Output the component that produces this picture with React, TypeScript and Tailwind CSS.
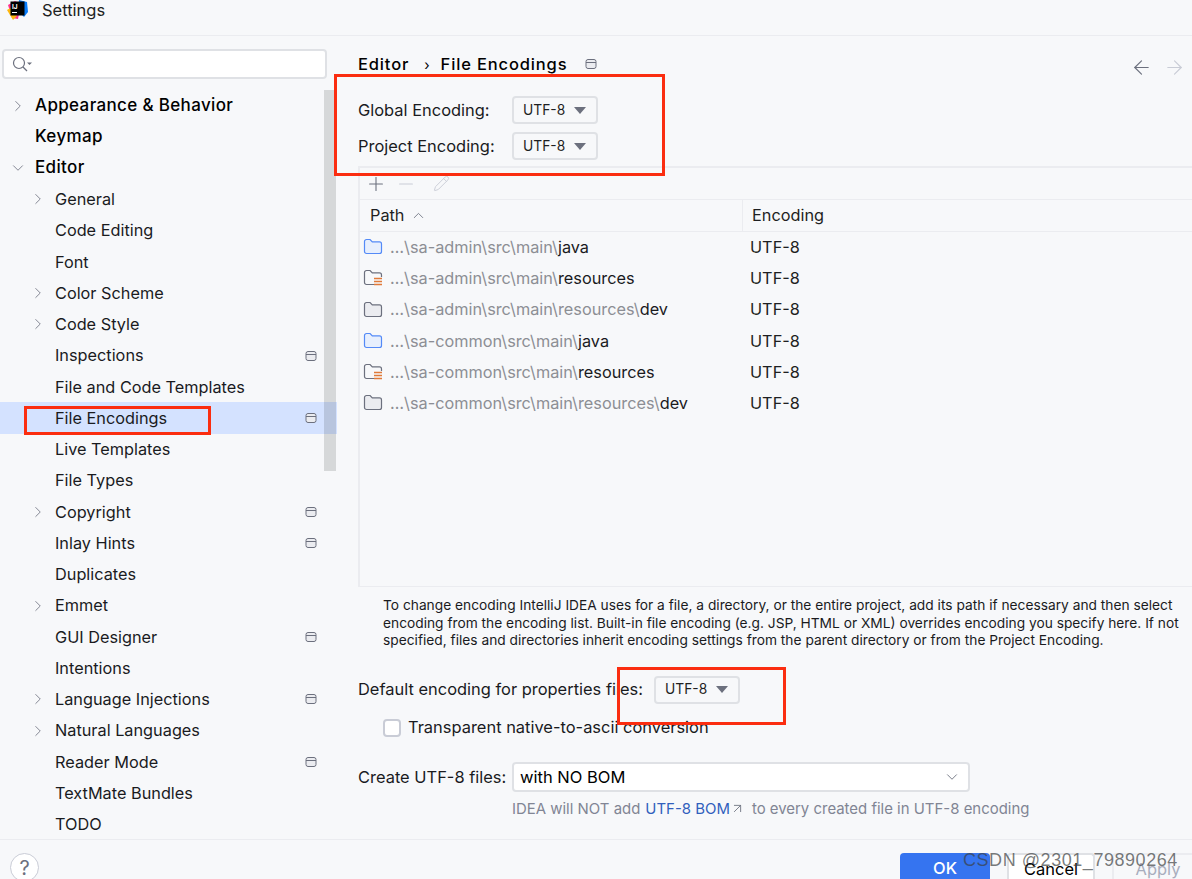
import { ChevronDown, ChevronRight, ChevronUp, Plus, Minus, Pencil, ArrowLeft, ArrowRight, ArrowUpRight } from "lucide-react";

const font = { fontFamily: "Inter, 'Noto Sans', sans-serif" };

type Node = { label: string; level: 0 | 1; arrow?: "right" | "down"; bold?: boolean; badge?: boolean; selected?: boolean };

const tree: Node[] = [
  { label: "Appearance & Behavior", level: 0, arrow: "right", bold: true },
  { label: "Keymap", level: 0, bold: true },
  { label: "Editor", level: 0, arrow: "down", bold: true },
  { label: "General", level: 1, arrow: "right" },
  { label: "Code Editing", level: 1 },
  { label: "Font", level: 1 },
  { label: "Color Scheme", level: 1, arrow: "right" },
  { label: "Code Style", level: 1, arrow: "right" },
  { label: "Inspections", level: 1, badge: true },
  { label: "File and Code Templates", level: 1 },
  { label: "File Encodings", level: 1, badge: true, selected: true },
  { label: "Live Templates", level: 1 },
  { label: "File Types", level: 1 },
  { label: "Copyright", level: 1, arrow: "right", badge: true },
  { label: "Inlay Hints", level: 1, badge: true },
  { label: "Duplicates", level: 1 },
  { label: "Emmet", level: 1, arrow: "right" },
  { label: "GUI Designer", level: 1, badge: true },
  { label: "Intentions", level: 1 },
  { label: "Language Injections", level: 1, arrow: "right", badge: true },
  { label: "Natural Languages", level: 1, arrow: "right" },
  { label: "Reader Mode", level: 1, badge: true },
  { label: "TextMate Bundles", level: 1 },
  { label: "TODO", level: 1 },
];

const paths = [
  { dim: "…\\sa-admin\\src\\main\\", end: "java", kind: "source" },
  { dim: "…\\sa-admin\\src\\main\\", end: "resources", kind: "res" },
  { dim: "…\\sa-admin\\src\\main\\resources\\", end: "dev", kind: "plain" },
  { dim: "…\\sa-common\\src\\main\\", end: "java", kind: "source" },
  { dim: "…\\sa-common\\src\\main\\", end: "resources", kind: "res" },
  { dim: "…\\sa-common\\src\\main\\resources\\", end: "dev", kind: "plain" },
];

function ProjectBadge() {
  return (
    <svg width="12" height="12" viewBox="0 0 12 12" fill="none" className="shrink-0">
      <rect x="1" y="1.5" width="10" height="9" rx="2" fill="#ebecf0" stroke="#6c707e" />
      <path d="M1 4.5h10" stroke="#6c707e" />
    </svg>
  );
}

function FolderIcon({ kind }: { kind: string }) {
  const blue = kind === "source";
  const stroke = blue ? "#548af7" : "#6c707e";
  const fill = blue ? "#e7effd" : "#ebecf0";
  return (
    <svg width="20" height="18" viewBox="0 0 20 18" fill="none" className="shrink-0">
      {kind === "res" ? (
        <>
          <path
            d="M11 15.5H3.5a2 2 0 0 1-2-2v-10a2 2 0 0 1 2-2h3.6l2.2 2.4h7.2a2 2 0 0 1 2 2V8"
            fill="none"
            stroke={stroke}
            strokeWidth="1.2"
          />
          <path d="M11 9.5h8M11 12.5h8M11 15.5h8" stroke="#e07a3a" strokeWidth="1.6" />
        </>
      ) : (
        <path
          d="M3.5 1.5h3.6l2.2 2.4h7.2a2 2 0 0 1 2 2v7.6a2 2 0 0 1-2 2h-13a2 2 0 0 1-2-2v-10a2 2 0 0 1 2-2z"
          fill={fill}
          stroke={stroke}
          strokeWidth="1.2"
        />
      )}
    </svg>
  );
}

function EncodingSelect() {
  return (
    <div className="flex h-[28px] w-[86px] items-center rounded-[4px] border-2 border-[#dfe1e5] pl-[9px] text-[13.8px] text-[#1e1f22]">
      <span>UTF-8</span>
      <span className="ml-[9px] h-0 w-0 border-x-[6px] border-t-[7px] border-x-transparent border-t-[#6c707e]" />
    </div>
  );
}

function TreeRow({ node }: { node: Node }) {
  return (
    <div
      className={`relative flex h-[31.25px] shrink-0 items-center ${node.selected ? "bg-[#d4e2ff]" : ""} ${
        node.level === 0 ? "pl-[35px]" : "pl-[55px]"
      }`}
    >
      {node.arrow === "right" && (
        <ChevronRight
          size={18}
          strokeWidth={1.1}
          color="#6c707e"
          className={`absolute ${node.level === 0 ? "left-[9px]" : "left-[29px]"}`}
        />
      )}
      {node.arrow === "down" && <ChevronDown size={18} strokeWidth={1.1} color="#6c707e" className="absolute left-[9px]" />}
      <span className={node.bold ? "text-[17px] font-medium tracking-[0.35px] text-[#000]" : "text-[16.3px] text-[#1a1b1e]"}>
        {node.label}
      </span>
      {node.badge && (
        <span className="absolute left-[305px]">
          <ProjectBadge />
        </span>
      )}
    </div>
  );
}

function Sidebar() {
  return (
    <aside className="relative w-[337px] shrink-0 overflow-hidden">
      <div className="ml-[2px] mt-[13px] flex h-[30px] w-[325px] items-center rounded-[4px] border-2 border-[#dfe1e5] bg-white pl-[8px]">
        <svg width="20" height="18" viewBox="0 0 20 18" fill="none">
          <circle cx="7" cy="8" r="5.5" stroke="#6c707e" strokeWidth="1.2" />
          <path d="M11 12l4 4" stroke="#6c707e" strokeWidth="1.2" />
          <path d="M15 7.5h5l-2.5 2.5z" fill="#6c707e" />
        </svg>
      </div>
      <div className="mt-[10.9px] flex flex-col">
        {tree.map((node) => (
          <TreeRow key={node.label} node={node} />
        ))}
      </div>
      {/* scrollbar thumb sits over the tree */}
      <div className="absolute left-[324px] top-[54px] h-[381px] w-[12px] bg-[#1e1f22]/15" />
    </aside>
  );
}

function EncodingTable() {
  return (
    <div className="mt-[6px] h-[421px] border-l-2 border-t-2 border-b border-[#ebecf0]">
      <div className="flex h-[32px] items-center gap-[8px] border-b border-[#ebecf0] pl-[5px]">
        <Plus size={22} strokeWidth={1.2} color="#6c707e" />
        <Minus size={22} strokeWidth={1.2} color="#c9ccd6" />
        <Pencil size={17} strokeWidth={1.3} color="#c9ccd6" className="ml-[8px]" />
      </div>
      <div className="flex h-[31.6px] items-center border-b border-[#ebecf0] text-[16.3px] text-[#1e1f22]">
        <div className="flex h-full w-[383px] items-center gap-[5px] border-r border-[#ebecf0] pl-[10px]">
          <span>Path</span>
          <ChevronUp size={17} strokeWidth={1.2} color="#6c707e" />
        </div>
        <div className="pl-[9px]">Encoding</div>
      </div>
      <div className="flex flex-col text-[16.3px]">
        {paths.map((p) => (
          <div key={p.dim + p.end} className="flex h-[31.2px] items-center">
            <div className="flex w-[389px] items-center gap-[7px] pl-[3px]">
              <FolderIcon kind={p.kind} />
              <span className="whitespace-nowrap">
                <span className="text-[#8c8e94]">{p.dim}</span>
                <span className="text-[#1a1b1e]">{p.end}</span>
              </span>
            </div>
            <span className="pl-[1px] text-[#1e1f22]">UTF-8</span>
          </div>
        ))}
      </div>
    </div>
  );
}

function Content() {
  return (
    <main className="min-w-0 flex-1 pl-[21px]">
      <div className="mt-[16px] flex h-[24px] items-center text-[#000]">
        <span className="text-[16.5px] font-medium tracking-[0.85px]">Editor</span>
        <span className="ml-[15px] text-[14px]">›</span>
        <span className="ml-[11px] text-[16.5px] font-medium tracking-[0.85px]">File Encodings</span>
        <span className="ml-[18px]">
          <ProjectBadge />
        </span>
        <div className="ml-auto flex items-center gap-[10px] pr-[6px] pt-[6px]">
          <ArrowLeft size={23} strokeWidth={1.2} color="#6c707e" />
          <ArrowRight size={23} strokeWidth={1.2} color="#c9ccd6" />
        </div>
      </div>
      <div className="mt-[20px] flex h-[28px] items-center text-[16.45px] text-[#1a1b1e]">
        <span className="w-[154px]">Global Encoding:</span>
        <EncodingSelect />
      </div>
      <div className="mt-[8px] flex h-[28px] items-center text-[16.45px] text-[#1a1b1e]">
        <span className="w-[154px]">Project Encoding:</span>
        <EncodingSelect />
      </div>
      <EncodingTable />
      <p className="ml-[25px] mt-[10px] w-[806px] text-[13.75px] leading-[17.6px] text-[#1a1b1e]">
        To change encoding IntelliJ IDEA uses for a file, a directory, or the entire project, add its path if necessary and then select
        encoding from the encoding list. Built-in file encoding (e.g. JSP, HTML or XML) overrides encoding you specify here. If not
        specified, files and directories inherit encoding settings from the parent directory or from the Project Encoding.
      </p>
      <div className="mt-[26px] flex h-[28px] items-center text-[16.45px] text-[#1a1b1e]">
        <span className="w-[296px] whitespace-nowrap">Default encoding for properties files:</span>
        <EncodingSelect />
      </div>
      <div className="ml-[25px] mt-[10px] flex h-[28px] items-center gap-[7px] text-[16.45px] text-[#1a1b1e]">
        <span className="h-[18px] w-[18px] rounded-[4px] border-2 border-[#c9ccd6] bg-white" />
        <span>Transparent native-to-ascii conversion</span>
      </div>
      <div className="mt-[20px] flex h-[30px] items-center text-[16.45px] text-[#1a1b1e]">
        <span className="w-[154px] pt-[2px]">Create UTF-8 files:</span>
        <div className="flex h-[30px] w-[458px] items-center justify-between rounded-[4px] border-2 border-[#dfe1e5] bg-white pl-[6px] pr-[7px]">
          <span className="pt-[2px] text-[16.5px] text-[#000]">with NO BOM</span>
          <ChevronDown size={18} strokeWidth={1.2} color="#6c707e" />
        </div>
      </div>
      <div className="ml-[154px] mt-[7px] flex h-[20px] items-center text-[14.95px] text-[#818594]">
        <span>IDEA will NOT add</span>
        <span className="ml-[5px] text-[#315fbd]">UTF-8 BOM</span>
        <ArrowUpRight size={15} strokeWidth={1.4} color="#6c707e" />
        <span className="ml-[7px]">to every created file in UTF-8 encoding</span>
      </div>
    </main>
  );
}

function Footer() {
  return (
    <footer className="flex h-[40px] items-start overflow-hidden border-t border-[#ebecf0] pt-[13px] text-[16.45px]">
      <div className="ml-[10px] flex h-[29px] w-[29px] shrink-0 items-center justify-center rounded-full border border-[#c9ccd6] bg-white text-[20px] text-[#6c707e]">
        ?
      </div>
      <div className="ml-auto flex items-start">
        <div className="flex h-[30px] w-[90px] items-center justify-center rounded-t-[4px] bg-[#3574f0] pt-[1px] font-medium text-white">
          OK
        </div>
        <div className="ml-[17px] flex h-[30px] w-[88px] items-center justify-center rounded-t-[4px] border-2 border-b-0 border-[#dfe1e5] bg-white text-[#000]">
          Cancel
        </div>
        <div className="ml-[17px] flex h-[30px] w-[80px] items-center justify-center rounded-tl-[4px] border-l-2 border-t-2 border-[#ebecf0] pl-[10px] text-[#a8adbd]">
          Apply
        </div>
      </div>
    </footer>
  );
}

export default function App() {
  return (
    <div className="relative h-[879px] w-[1192px] overflow-hidden bg-[#f7f8fa]" style={font}>
      <header className="flex h-[36px] items-start border-b border-[#ebecf0] pl-[7px]">
        <svg width="21" height="21" viewBox="0 0 21 21" className="shrink-0">
          <path d="M1 5l7-4 6 3-3 15-6-1z" fill="#ff318c" />
          <path d="M12 0l8 2 1 10-4 5-6-6z" fill="#087cfa" />
          <path d="M0 10l5-3 5 9-4 4z" fill="#fdb60d" />
          <rect x="3.5" y="1.5" width="14" height="14" fill="#000" />
          <text x="5" y="8.5" fontSize="6.5" fontWeight="700" fill="#fff" fontFamily="Inter, sans-serif">
            IJ
          </text>
          <rect x="5" y="12" width="5" height="1" fill="#fff" />
        </svg>
        <span className="ml-[14px] text-[16.5px] leading-[20px] text-[#1e1f22]">Settings</span>
      </header>
      <div className="flex h-[803px]">
        <Sidebar />
        <Content />
      </div>
      <Footer />

      {/* red annotation boxes drawn on top of the screenshot */}
      <div className="absolute left-[334px] top-[74px] h-[102px] w-[331px] border-[3px] border-[#fb2d10]" />
      <div className="absolute left-[24px] top-[406px] h-[29px] w-[187px] border-[3px] border-[#fb2d10]" />
      <div className="absolute left-[617px] top-[667px] h-[58px] w-[169px] border-[3px] border-[#fb2d10]" />

      <div
        className="absolute left-[963px] top-[849px] text-[18px] leading-[22px] tracking-[0.55px] text-[#3c3f41]/70"
        style={{ fontFamily: "'Liberation Sans', sans-serif" }}
      >
        CSDN @2301_79890264
      </div>
    </div>
  );
}
